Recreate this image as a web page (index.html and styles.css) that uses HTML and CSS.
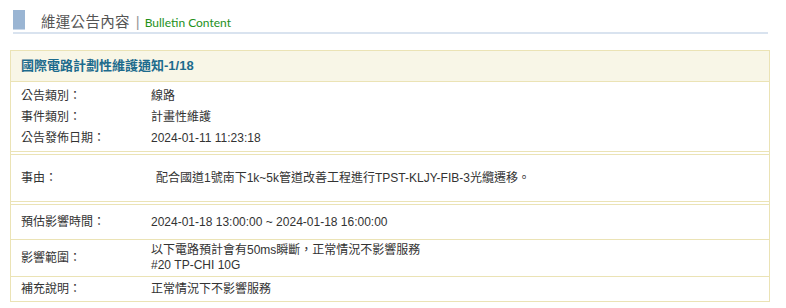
FILE: index.html
```html
<!DOCTYPE html>
<html lang="zh-Hant">
<head>
  <meta charset="UTF-8">
  <meta name="viewport" content="width=device-width, initial-scale=1.0">
  <title>維運公告內容</title>
  <link rel="stylesheet" href="styles.css">
</head>
<body>
  <div class="page-title">
    <span class="title-mark"></span>
    <h1>維運公告內容</h1>
    <span class="title-sep">|</span>
    <span class="title-en">Bulletin Content</span>
  </div>

  <div class="bulletin">
    <div class="bulletin-head">國際電路計劃性維護通知-1/18</div>

    <div class="section info">
      <div class="row"><span class="label">公告類別：</span><span class="value">線路</span></div>
      <div class="row"><span class="label">事件類別：</span><span class="value">計畫性維護</span></div>
      <div class="row"><span class="label">公告發佈日期：</span><span class="value">2024-01-11 11:23:18</span></div>
    </div>

    <div class="section reason">
      <div class="row"><span class="label">事由：</span><span class="value indent">配合國道1號南下1k~5k管道改善工程進行TPST-KLJY-FIB-3光纜遷移。</span></div>
    </div>

    <div class="section detail">
      <div class="row time"><span class="label">預估影響時間：</span><span class="value">2024-01-18 13:00:00 ~ 2024-01-18 16:00:00</span></div>
      <div class="row scope"><span class="label">影響範圍：</span><span class="value">以下電路預計會有50ms瞬斷，正常情況不影響服務<br>#20 TP-CHI 10G</span></div>
      <div class="row note"><span class="label">補充說明：</span><span class="value">正常情況下不影響服務</span></div>
    </div>
  </div>
</body>
</html>
```

FILE: styles.css
```css
* {
  box-sizing: border-box;
  margin: 0;
  padding: 0;
}

body {
  background-color: #ffffff;
  color: #333333;
  font-family: "Liberation Sans", "Noto Sans CJK TC", sans-serif;
  font-size: 12px;
}

/* page heading */
.page-title {
  align-items: flex-end;
  border-bottom: 2px solid #d9e3ef;
  display: flex;
  height: 24px;
  margin: 10px 18px 0 13px;
}

.title-mark {
  align-self: flex-start;
  background-color: #9ab5d3;
  border-bottom: 1px solid #c9d8ea;
  height: 20px;
  margin-right: 16px;
  width: 12px;
}

h1 {
  color: #555555;
  font-size: 14.5px;
  font-weight: normal;
  letter-spacing: .3px;
  line-height: 20px;
}

.title-sep {
  color: #999999;
  font-size: 15px;
  line-height: 20px;
  margin: 0 5px 0 6px;
}

.title-en {
  color: #23901a;
  font-family: Lato, sans-serif;
  font-size: 12px;
  line-height: 18px;
}

/* bulletin box */
.bulletin {
  border: 1px solid #ebe3b5;
  margin: 16px 16px 0 10px;
}

.bulletin-head {
  background-color: #f8f6e7;
  border-bottom: 1px solid #ebe3b5;
  color: #1d6b8d;
  font-size: 13px;
  font-weight: bold;
  height: 31px;
  line-height: 30px;
  padding-left: 10px;
}

.section + .section {
  border-top: 1px solid #ebe3b5;
  margin-top: 2px;
}

.row {
  align-items: center;
  display: flex;
  line-height: 15px;
  padding-left: 10px;
}

.label {
  flex: 0 0 130px;
}

.value {
  flex: 1;
}

.info {
  border-bottom: 1px solid #ebe3b5;
  padding: 4px 0 2px;
}

.info .row {
  height: 21px;
}

.reason {
  border-bottom: 1px solid #ebe3b5;
}

.reason .row {
  height: 46px;
}

.indent {
  padding-left: 5px;
}

.detail .row + .row {
  border-top: 1px solid #ebe3b5;
}

.detail .time {
  height: 34px;
}

.detail .scope {
  height: 37px;
}

.detail .note {
  height: 25px;
}
```
